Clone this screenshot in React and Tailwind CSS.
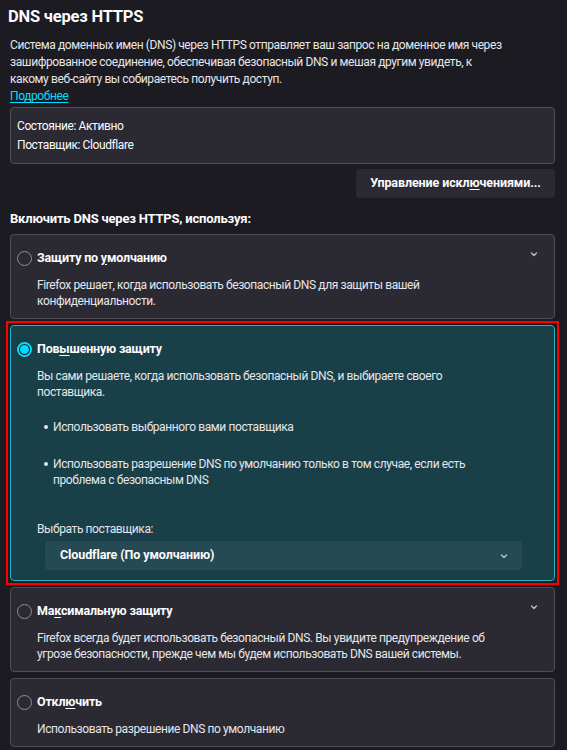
import { useState } from "react";

const OPTIONS = [
  {
    key: "default",
    title: ["Защиту по ", "у", "молчанию"],
    desc: "Firefox решает, когда использовать безопасный DNS для защиты вашей конфиденциальности.",
    chevron: true,
  },
  {
    key: "increased",
    title: ["Пов", "ы", "шенную защиту"],
    desc: "Вы сами решаете, когда использовать безопасный DNS, и выбираете своего поставщика.",
  },
  {
    key: "max",
    title: ["Ма", "к", "симальную защиту"],
    desc: "Firefox всегда будет использовать безопасный DNS. Вы увидите предупреждение об угрозе безопасности, прежде чем мы будем использовать DNS вашей системы.",
    chevron: true,
  },
  {
    key: "off",
    title: ["Откл", "ю", "чить"],
    desc: "Использовать разрешение DNS по умолчанию",
  },
];

function Chevron({ className = "" }) {
  return (
    <svg viewBox="0 0 10 10" className={`h-[10px] w-[10px] ${className}`} fill="none">
      <path d="M2.5 4 5 6.5 7.5 4" stroke="currentColor" strokeWidth="1.4" strokeLinecap="round" strokeLinejoin="round" />
    </svg>
  );
}

function Radio({ checked }) {
  if (checked) {
    return (
      <span className="grid h-[15px] w-[15px] shrink-0 place-items-center rounded-full border-2 border-[#00ddff] bg-[#1c1b22]">
        <span className="h-[9px] w-[9px] rounded-full bg-[#00ddff]" />
      </span>
    );
  }
  return <span className="h-[15px] w-[15px] shrink-0 rounded-full border border-[#8f8f9d]" />;
}

function Title({ parts }) {
  return (
    <span className="text-[12.5px] font-bold leading-[16px] tracking-[-0.2px] text-[#fbfbfe]">
      {parts[0]}
      <span className="underline underline-offset-2">{parts[1]}</span>
      {parts[2]}
    </span>
  );
}

function OptionCard({ opt, active, onSelect }) {
  return (
    <div
      onClick={onSelect}
      className={`relative rounded-[4px] border pl-[6px] pt-[15px] ${
        active ? "border-[#1fb5c4] bg-[#193f48] pb-[10px]" : "border-[#4f4e58] bg-[#2b2a33] pb-[9px]"
      }`}
    >
      <div className="flex items-center gap-[5px]">
        <Radio checked={active} />
        <Title parts={opt.title} />
      </div>
      {opt.chevron && <Chevron className="absolute right-[15px] top-[14px] text-[#c0c0c8]" />}
      <p className="mt-[11px] max-w-[489px] pl-[20px] leading-[16px] text-[#e6e6ea]">{opt.desc}</p>
      {active && (
        <>
          <ul className="mt-[19px] flex max-w-[489px] flex-col gap-[21px] pl-[27px] leading-[16px] text-[#e6e6ea]">
            <li className="flex gap-[5px]">
              <span className="mt-[6px] h-[4px] w-[4px] shrink-0 rounded-full bg-[#e6e6ea]" />
              <span>Использовать выбранного вами поставщика</span>
            </li>
            <li className="flex gap-[5px]">
              <span className="mt-[6px] h-[4px] w-[4px] shrink-0 rounded-full bg-[#e6e6ea]" />
              <span>
                Использовать разрешение DNS по умолчанию только в том случае, если есть проблема с
                безопасным DNS
              </span>
            </li>
          </ul>
          <div className="mt-[33px] pl-[20px] leading-[16px] text-[#e6e6ea]">Выбрать поставщика:</div>
          <div className="ml-[28px] mr-[32px] mt-[4px] flex h-[29px] items-center justify-between rounded-[4px] bg-[#264a54] pl-[15px] pr-[13px]">
            <span className="text-[12.5px] font-bold tracking-[-0.1px]">Cloudflare (По умолчанию)</span>
            <Chevron className="text-[#c0c0c8]" />
          </div>
        </>
      )}
    </div>
  );
}

export default function App() {
  const [selected, setSelected] = useState("increased");

  return (
    <div
      className="min-h-[750px] w-[567px] bg-[#1c1b22] pl-[10px] pr-[12px] pt-[4px] text-[12px] tracking-[-0.4px] text-[#fbfbfe]"
      style={{ fontFamily: "Roboto, 'Noto Sans', sans-serif" }}
    >
      <h1 className="-ml-[2px] text-[16.5px] font-bold leading-[26px] tracking-[-0.2px]">DNS через HTTPS</h1>
      <p className="mt-[7px] max-w-[495px] leading-[17px] text-[#e6e6ea]">
        Система доменных имен (DNS) через HTTPS отправляет ваш запрос на доменное имя через
        зашифрованное соединение, обеспечивая безопасный DNS и мешая другим увидеть, к
        какому веб-сайту вы собираетесь получить доступ.
      </p>
      <a className="block leading-[17px] text-[#00ddff] underline underline-offset-2">Подробнее</a>

      <div className="mt-[2px] rounded-[4px] border border-[#4f4e58] bg-[#2b2a33] px-[6px] pb-[8px] pt-[9px] leading-[19px]">
        <div>Состояние: Активно</div>
        <div>Поставщик: Cloudflare</div>
      </div>

      <div className="mt-[5px] flex justify-end">
        <button className="h-[29px] w-[199px] rounded-[4px] bg-[#2b2a33] text-[12.5px] font-bold tracking-[-0.1px] text-[#fbfbfe]">
          Управление искл<span className="underline underline-offset-2">ю</span>чениями...
        </button>
      </div>

      <h2 className="mt-[12px] text-[13px] font-bold leading-[18px] tracking-[-0.2px]">
        Включить DNS через HTTPS, используя:
      </h2>

      <div className="mt-[6px] flex flex-col gap-[6px]">
        {OPTIONS.map((opt) => {
          const active = selected === opt.key;
          const card = <OptionCard opt={opt} active={active} onSelect={() => setSelected(opt.key)} />;
          return active ? (
            <div key={opt.key} className="-mx-[4px] -my-[4px] border-2 border-[#ff0000] p-[2px]">
              {card}
            </div>
          ) : (
            <div key={opt.key}>{card}</div>
          );
        })}
      </div>
    </div>
  );
}
